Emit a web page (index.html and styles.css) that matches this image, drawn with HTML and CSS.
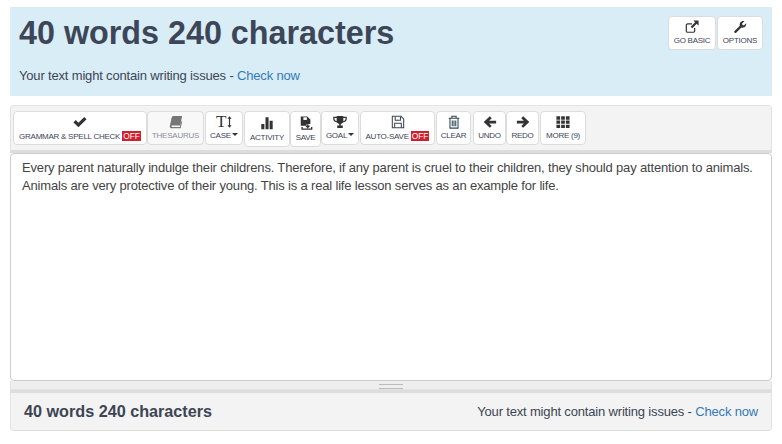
FILE: index.html
```html
<!DOCTYPE html>
<html lang="en">
<head>
<meta charset="utf-8">
<title>Word counter</title>
<link rel="stylesheet" href="styles.css">
</head>
<body>
<div class="page">
  <header class="hero">
    <div class="hero-text">
      <h1 class="hero-title">40 words 240 characters</h1>
      <p class="hero-note">Your text might contain writing issues - <a class="link" href="#">Check now</a></p>
    </div>
    <div class="hero-actions">
      <button class="btn btn-gobasic"><svg class="ico" viewBox="0 0 16 16"><path d="M11 9V12.5a1.5 1.5 0 0 1-1.5 1.5H3a1.5 1.5 0 0 1-1.5-1.5V6A1.5 1.5 0 0 1 3 4.5H8" fill="none" stroke="#333" stroke-width="1.4"/><path d="M9.5 0.5H15.5V6.5L13.4 4.4 8.3 9.5 6.5 7.7 11.6 2.6Z" fill="#333"/></svg><span>GO BASIC</span></button>
      <button class="btn btn-options"><svg class="ico" viewBox="0 0 16 16"><path d="M1.5 12.8 7.8 6.6C7 4 8.6 1 12 1L13.2 1.2 10.4 4 10.8 5.8 12.5 6.2 15 3.7C15.6 7 12.8 9.6 9.6 8.5L3.6 14.6C2.5 15.4 .8 14 1.5 12.8Z" fill="#333"/></svg><span>OPTIONS</span></button>
    </div>
  </header>

  <section class="panel">
    <div class="toolbar">
      <button class="btn btn-grammar"><svg class="ico" viewBox="0 0 16 16"><path d="M.5 8.5 3.2 5.8 6.2 8.8 12.8 2.2 15.5 4.9 6.2 14Z" fill="#333"/></svg><span>GRAMMAR &amp; SPELL CHECK <b class="off">OFF</b></span></button>
      <button class="btn btn-thes is-muted"><svg class="ico" viewBox="0 0 16 16"><path d="M5 1H15L12.8 12H3.6C2.4 12 2.6 13.6 3.6 13.6H12.6L14 7 15 7.5 13.4 15.2H3C1.2 15.2 .6 13.6 1 12.2L3 3C3.2 1.8 4 1 5 1Z" fill="#777"/></svg><span>THESAURUS</span></button>
      <button class="btn btn-case"><span class="case-ico">T<svg class="case-arrow" viewBox="0 0 6 14"><path d="M3 0 5.5 3H3.7V11H5.5L3 14 .5 11H2.3V3H.5Z" fill="#333"/></svg></span><span>CASE<i class="caret"></i></span></button>
      <button class="btn btn-tall btn-activity"><svg class="ico" viewBox="0 0 16 16"><path d="M1.5 9H5V15H1.5ZM6.3 1.5H9.8V15H6.3ZM11 5.5H14.5V15H11Z" fill="#333"/></svg><span>ACTIVITY</span></button>
      <button class="btn btn-tall btn-save"><svg class="ico" viewBox="0 0 16 16"><path d="M2 0.5H9.5L13 4V9H9L8 11H2Z" fill="#333"/><path d="M5 1.5H9V4.5H5Z" fill="#fff"/><path d="M10 9.5V13M8 11 10 13.2 12 11M3.5 12.5V15H14.5V12.5" fill="none" stroke="#333" stroke-width="1.5"/></svg><span>SAVE</span></button>
      <button class="btn btn-goal"><svg class="ico" viewBox="0 0 16 16"><path d="M4.2 1H11.8V7C11.8 9 9.5 10 8.9 10.2V12H11.2V14.8H4.8V12H7.1V10.2C6.5 10 4.2 9 4.2 7Z" fill="#333"/><path d="M4.5 2.6H1V4.6C1 6.4 3 7.6 5 8M11.5 2.6H15V4.6C15 6.4 13 7.6 11 8" fill="none" stroke="#333" stroke-width="1.4"/></svg><span>GOAL<i class="caret"></i></span></button>
      <button class="btn btn-auto"><svg class="ico" viewBox="0 0 16 16"><path d="M1.5 1.5H11.5L14.5 4.5V14.5H1.5Z" fill="none" stroke="#3d4555" stroke-width="1.2"/><path d="M4.8 2V6H10.8V2M4.2 14.5V9.5H11.8V14.5" fill="none" stroke="#3d4555" stroke-width="1.2"/></svg><span>AUTO-SAVE <b class="off">OFF</b></span></button>
      <button class="btn btn-clear"><svg class="ico" viewBox="0 0 16 16"><path d="M2 3.8H14M5.6 3.8V1.5H10.4V3.8M3.4 4V15H12.6V4M6 6.3V12.8M8 6.3V12.8M10 6.3V12.8" fill="none" stroke="#2f4550" stroke-width="1.2"/></svg><span>CLEAR</span></button>
      <button class="btn btn-undo"><svg class="ico" viewBox="0 0 16 16"><path d="M7.8 1.5 10 3.7 7 6.5H15V9.7H7L10 12.5 7.8 14.7 .8 8.1Z" fill="#333"/></svg><span>UNDO</span></button>
      <button class="btn btn-redo"><svg class="ico" viewBox="0 0 16 16"><path d="M8.2 1.5 6 3.7 9 6.5H1V9.7H9L6 12.5 8.2 14.7 15.2 8.1Z" fill="#333"/></svg><span>REDO</span></button>
      <button class="btn btn-more"><svg class="ico" viewBox="0 0 16 16"><path d="M.5 1.5H4.7V5.3H.5ZM5.9 1.5H10.1V5.3H5.9ZM11.3 1.5H15.5V5.3H11.3ZM.5 6.3H4.7V10H.5ZM5.9 6.3H10.1V10H5.9ZM11.3 6.3H15.5V10H11.3ZM.5 11H4.7V14.8H.5ZM5.9 11H10.1V14.8H5.9ZM11.3 11H15.5V14.8H11.3Z" fill="#333"/></svg><span>MORE (9)</span></button>
    </div>
    <div class="editor">Every parent naturally indulge their childrens. Therefore, if any parent is cruel to their children, they should pay attention to animals. Animals are very protective of their young. This is a real life lesson serves as an example for life.</div>
    <div class="resizer"><span class="grip"></span></div>
    <footer class="status">
      <strong class="status-count">40 words 240 characters</strong>
      <span class="status-note">Your text might contain writing issues - <a class="link" href="#">Check now</a></span>
    </footer>
  </section>
</div>
</body>
</html>
```
FILE: styles.css
```css
* { box-sizing: border-box; }
html, body { margin: 0; padding: 0; background: #fff; }
body { font-family: "Liberation Sans", Arial, sans-serif; color: #3d4555; }
.page { padding: 7px 10px 0; width: 782px; }
.link { color: #337ab7; text-decoration: none; }

.hero { height: 89px; background: #d9edf7; display: flex; justify-content: space-between; padding: 0 9px 0 9px; }
.hero-title { margin: 8px 0 0; font-size: 32.3px; line-height: 36px; font-weight: 700; color: #3d4658; }
.hero-note { margin: 15px 0 0; font-size: 13px; letter-spacing: -.17px; line-height: 20px; color: #3d4555; }
.hero-actions { display: flex; padding-top: 9px; align-items: flex-start; }

.btn { display: flex; flex-direction: column; align-items: center; height: 34px; padding: 3px 0 0; margin: 0; border: 1px solid #dcdcdc; border-radius: 4px; background: #fff; font-family: inherit; font-size: 8px; letter-spacing: -.25px; line-height: 10px; color: #3d4555; white-space: nowrap; flex: none; }
.ico { width: 14px; height: 14px; display: block; margin-bottom: 2px; }
.btn-gobasic { width: 48px; }
.btn-options { width: 46px; margin-left: 1px; }
.is-muted { color: #8a8f98; background: #f8f8f8; }
.off { background: #d0202e; color: #fff; font-weight: 400; font-size: 8.4px; letter-spacing: 0; padding: 0 1px; }
.caret { display: inline-block; margin-left: 1px; vertical-align: 2px; border-left: 3px solid transparent; border-right: 3px solid transparent; border-top: 3px solid #333; }
.case-ico { display: flex; align-items: flex-start; font-family: "Liberation Serif", serif; font-size: 17px; line-height: 14px; height: 14px; margin-bottom: 2px; color: #333; }
.case-arrow { width: 5px; height: 12px; margin: 1px 0 0 1px; }

.panel { margin-top: 9px; }
.toolbar { height: 48px; background: #f3f3f3; border: 1px solid #e3e3e3; border-bottom: 3px solid #ddd; border-radius: 4px 4px 0 0; display: flex; align-items: flex-start; padding: 5px 2px 0; }
.btn-grammar { width: 134px; }
.btn-thes { width: 57px; }
.btn-case { width: 38px; margin-left: 1px; }
.btn-tall { height: 36px; padding-top: 4px; }
.btn-tall .ico { margin-bottom: 3px; }
.btn-activity { width: 46px; margin-left: 1px; }
.btn-save { width: 31px; }
.btn-goal { width: 38px; }
.btn-auto { width: 75px; margin-left: 1px; }
.btn-clear { width: 35px; margin-left: 1px; }
.btn-undo { width: 33px; margin-left: 2px; }
.btn-redo { width: 33px; }
.btn-more { width: 46px; margin-left: 1px; }

.editor { height: 228px; background: #fff; border: 1px solid #ccc; border-radius: 4px; padding: 5px 10px 5px 11px; font-size: 13px; letter-spacing: -.17px; line-height: 18px; color: #444; }
.resizer { height: 9px; background: #eee; border: 1px solid #e3e3e3; border-top: 0; display: flex; justify-content: center; padding-top: 3px; }
.grip { width: 24px; height: 5px; border-top: 1px solid #bbb; border-bottom: 1px solid #bbb; }
.status { height: 41px; background: #f3f3f3; border: 1px solid #e3e3e3; border-top: 3px solid #ddd; border-bottom: 1px solid #ddd; border-radius: 0 0 4px 4px; display: flex; justify-content: space-between; align-items: center; padding: 0 13px; }
.status-count { font-size: 16.2px; color: #3d4555; }
.status-note { font-size: 13px; letter-spacing: -.17px; }
```
